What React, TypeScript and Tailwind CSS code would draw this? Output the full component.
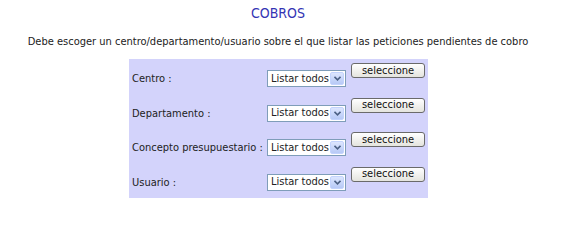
const ROWS = ['Centro :', 'Departamento :', 'Concepto presupuestario :', 'Usuario :'];

export default function App() {
  return (
    <div className="h-[242px] w-[566px] bg-white font-['DejaVu_Sans_Condensed','DejaVu_Sans',sans-serif] text-[11px] text-[#222]">
      <div className="w-[556px] pt-[5px] text-center">
        <h1 className="text-[14px] leading-[16px] text-[#3434b4]">COBROS</h1>
        <p className="mt-[14px] leading-[13px]">
          Debe escoger un centro/departamento/usuario sobre el que listar las peticiones pendientes de cobro
        </p>
      </div>

      <div className="ml-[129px] mt-[11px] w-[299px] bg-[#d3d3fb] pb-[1px]">
        {ROWS.map((label) => (
          <Row key={label} label={label} />
        ))}
      </div>
    </div>
  );
}

function Row({ label }: { label: string }) {
  return (
    <div className="flex h-[34.5px] items-start">
      <span className="mt-[13px] w-[138px] whitespace-nowrap pl-[3px] leading-[13px]">{label}</span>
      <Select />
      <button className="ml-[5px] mt-[4px] h-[15px] w-[74px] rounded-[3px] border border-[#6a6a6a] bg-gradient-to-b from-white to-[#e4e4de] text-[11px] leading-[12px] text-[#111]">
        seleccione
      </button>
    </div>
  );
}

function Select() {
  return (
    <div className="mt-[11px] flex h-[17px] w-[79px] items-center border border-[#7f9db9] bg-white">
      <span className="flex-1 whitespace-nowrap pl-[3px] text-[11px] leading-[14px]">Listar todos</span>
      <span className="mr-px flex h-[13px] w-[14px] items-center justify-center rounded-[2px] border border-[#c3d3fd] bg-gradient-to-b from-[#dde6fe] to-[#b7c9f6]">
        <svg width="7" height="5" viewBox="0 0 7 5">
          <path d="M0.5 0.8 L3.5 3.8 L6.5 0.8" fill="none" stroke="#4d6185" strokeWidth="1.6" />
        </svg>
      </span>
    </div>
  );
}
